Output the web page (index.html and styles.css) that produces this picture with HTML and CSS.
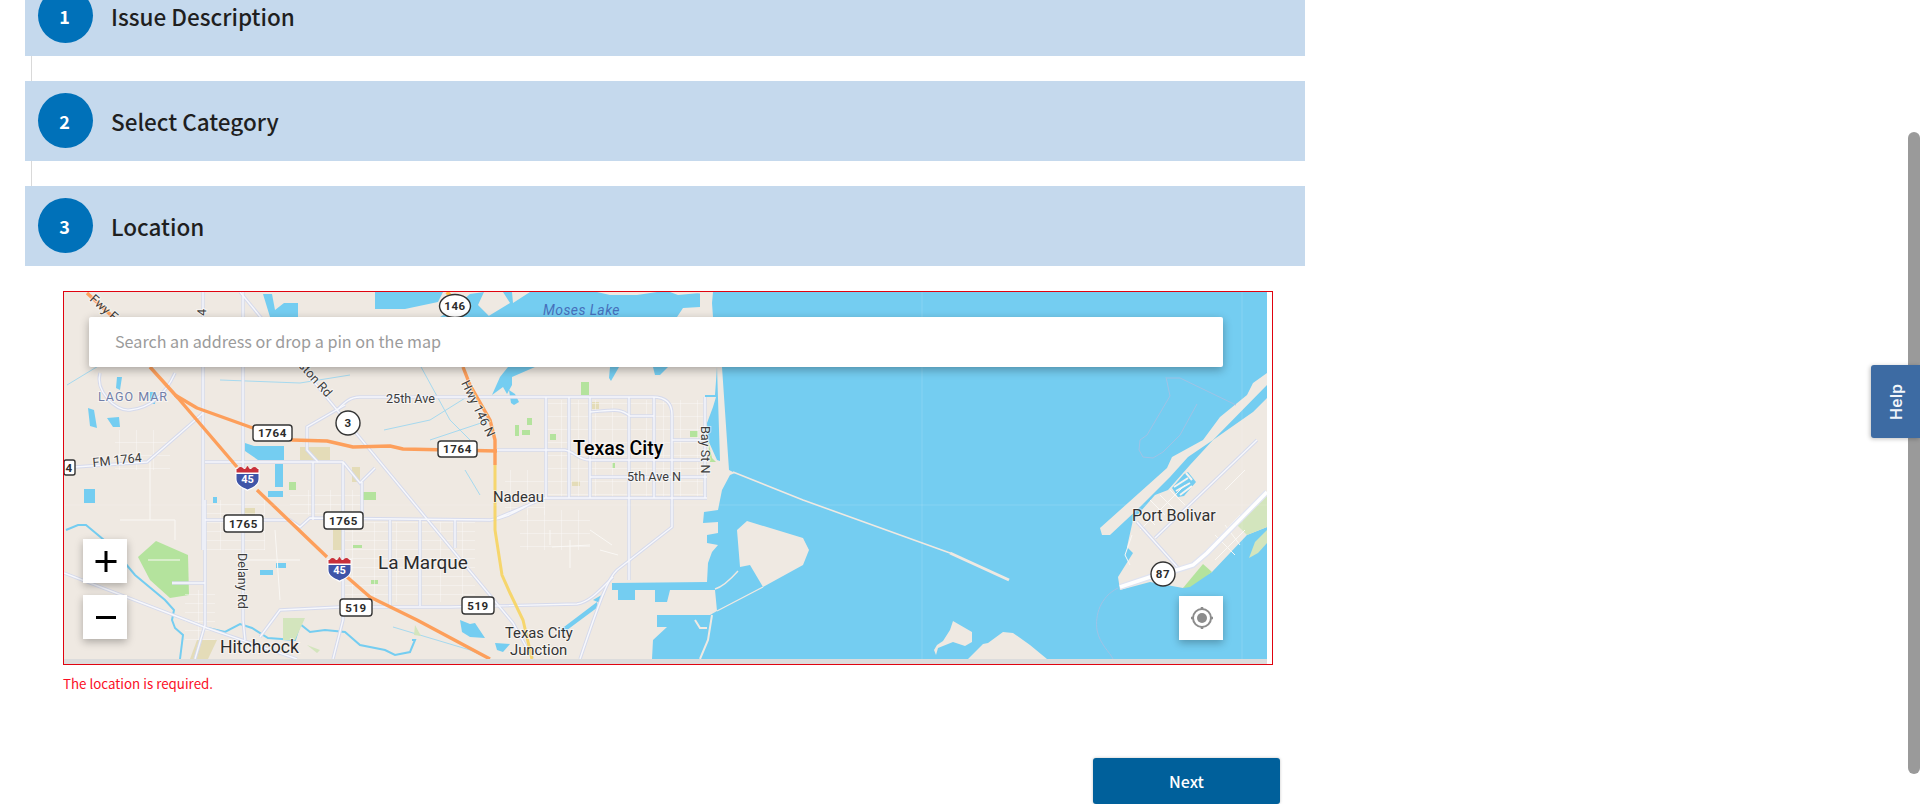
FILE: index.html
```html
<!DOCTYPE html>
<html lang="en">
<head>
<meta charset="utf-8">
<title>Report an issue</title>
<link rel="stylesheet" href="styles.css">
</head>
<body>
<div class="page">
  <div class="steps">
    <div class="step-header"><span class="step-num">1</span><h2 class="step-title">Issue Description</h2></div>
    <div class="connector"></div>
    <div class="step-header"><span class="step-num">2</span><h2 class="step-title">Select Category</h2></div>
    <div class="connector"></div>
    <div class="step-header"><span class="step-num">3</span><h2 class="step-title">Location</h2></div>
    <div class="step-body">
      <div class="map">
        <div class="map-view">
          <svg class="map-svg" viewBox="64 292 1203 367" width="1203" height="367" xmlns="http://www.w3.org/2000/svg">
            <defs>
              <pattern id="blocks" width="17" height="13" patternUnits="userSpaceOnUse">
                <path class="grid" d="M0 0H17M0 0V13"/>
              </pattern>
              <pattern id="blocks2" width="22" height="9" patternUnits="userSpaceOnUse">
                <path class="grid" d="M0 0H22M0 0V9"/>
              </pattern>
              <g id="i45">
                <path class="sh-white" d="M-12 -9 H12 V2 C12 9 5 11 0 14 C-5 11 -12 9 -12 2Z"/>
                <path class="sh-blue" d="M-11 -3 H11 V2 C11 8 5 10 0 12.5 C-5 10 -11 8 -11 2Z"/>
                <path class="sh-red" d="M-11 -8 C-9 -8 -9 -10 -7 -10 C-5 -10 -4 -8 -3 -8 C-1 -8 -1 -11 0 -11 C1 -11 1 -8 3 -8 C4 -8 5 -10 7 -10 C9 -10 9 -8 11 -8 V-4.5 H-11Z"/>
              </g>
              <g id="roads">
                <path d="M240 292 L337 410 L450 547 L513 623 L533 659"/>
                <path d="M337 410 C345 402 350 397 360 397 H653 C668 397 672 405 672 415 V527 L617 570 C608 578 600 600 580 659"/>
                <path d="M203 292 V550 M205 500 V625 L195 659"/>
                <path d="M243 292 V620 M243 620 L245 640"/>
                <path d="M75 467 L147 462 L193 422 L203 413"/>
                <path d="M100 373 C95 390 115 412 130 410 C150 408 165 395 175 373"/>
                <path d="M345 405 L307 427 V450 L318 462"/>
                <path d="M205 462 H343 M313 462 V520 M343 462 V520 M362 482 V520 M343 462 L360 483 L375 468"/>
                <path d="M205 520 H290 L300 527 L310 518 L490 520 C510 518 525 505 543 498 H707 M497 518 L545 498"/>
                <path d="M497 450 H565 C575 452 578 460 590 460 H707 M590 477 H707 M672 440 H705 M705 397 V498 M590 412 C615 410 620 408 630 416 H654"/>
                <path d="M546 397 V498 M569 397 V498 M590 397 V498 M629 397 V580 M654 397 V498"/>
                <path d="M390 520 V606 M420 520 V606 M455 520 V548"/>
                <path d="M260 637 L280 610 L340 607 M372 607 H450 L577 604 C590 602 600 590 613 577"/>
                <path d="M343 520 V620 L333 659"/>
                <path d="M172 583 H205"/>
                <path d="M1257 440 L1155 538 M1137 522 L1180 570 M64 573 L207 628 L297 659"/>
              </g>
            </defs>

            <!-- land base -->
            <rect class="land" x="64" y="292" width="1203" height="367"/>

            <!-- bay -->
            <path class="water" d="M487 317 L510 303 L503 292 H1267 V659 H652 L653 640 L667 627 H657 V615 H710 L717 611 L715 590 H670 L667 602 H655 V590 H635 V600 H618 V590 H612 V583 L707 582 L708 563 L712 552 L718 545 L707 543 V535 L718 533 V522 L703 523 L704 512 L718 510 L722 490 L730 475 L735 473 L729 470 L722 367 H487Z"/>
            <!-- shore pieces around Moses Lake -->
            <path class="land" d="M512 292 H530 L513 303Z M597 292 L610 295 H637 L657 292Z M670 292 L678 295 L700 293 V292Z M677 317 L683 308 L700 307 V292 H713 L712 303 L713 317Z"/>
            <path class="water" d="M717 367 L715 395 H705 V397 H716 L713 407 L707 423 L708 440 L717 460 L720 461Z"/>
            <path class="water" d="M535 367 L512 377 V385 L507 394 L503 387 L492 395 L500 377 L508 367Z"/>
            <path class="water" d="M610 367 H619 L611 381 L609 378Z"/>
            <path class="water" d="M653 367 H668 L660 375 L655 375Z"/>
            <path class="water" d="M375 292 H443 L438 302 L405 309 H375Z"/>
            <path class="water" d="M263 294 L272 294 L275 310 L284 303 H298 V317 H270Z"/>
            <path class="water" d="M440 317 L452 310 L470 294 L484 292 L478 305 L490 317Z"/>
            <!-- breakwater -->
            <path class="dike" d="M733 472 L803 500 L950 553"/>
            <path class="dike-end" d="M950 553 L1009 580"/>
            <!-- land in the bay -->
            <path class="land" d="M737 530 L747 521 L803 538 L809 550 L803 565 L763 587 L750 565 L740 567Z"/>
            <path class="land-line" d="M763 587 L717 611 M738 571 C730 580 722 587 715 589"/>
            <path class="land-sliver" d="M712 615 L708 640 L700 659 M695 620 L700 628 L707 628"/>
            <path class="land" d="M953 621 L972 632 V642 L965 646 L953 642 L938 648 L936 655 L934 650 L937 645 L943 641 L950 630Z"/>
            <path class="land" d="M968 659 L983 644 L988 643 L1003 632 L1013 633 L1030 645 L1047 659Z"/>
            <!-- Bolivar strip and peninsula -->
            <path class="land" d="M1267 373 L1253 383 L1247 395 L1220 417 L1203 440 L1172 457 L1167 468 L1100 528 L1102 535 L1110 535 L1140 507 L1170 477 L1188 457 L1213 440 L1267 385Z"/>
            <path class="land" d="M1267 398 L1253 412 L1213 440 L1190 465 L1168 490 L1155 495 L1133 520 L1127 547 L1133 553 L1118 577 L1120 590 L1150 582 L1183 588 L1212 572 L1247 535 L1267 527Z"/>
            <path class="pale-green" d="M1237 525 L1267 492 V527 L1247 535Z"/>
            <path class="pale-green" d="M1249 558 L1255 542 L1267 530 V543 L1258 553Z"/>
            <path class="green" d="M1183 588 L1203 564 L1212 572 L1190 587Z"/>
            <path class="water" d="M1172 488 L1184 474 L1188 472 L1196 482 L1184 496 L1178 497Z"/>
            <path class="finger" d="M1174 487 L1188 478 M1176 491 L1190 483 M1180 495 L1192 486 M1186 473 L1192 480"/>
            <path class="marine" d="M1166 377 L1170 396 L1147 435 L1140 440 L1139 450 L1143 457 L1153 458 M1167 378 H1180 L1236 405 M1197 404 L1180 435 L1163 452 L1153 458"/>
            <path class="marine" d="M1118 588 C1100 597 1095 615 1097 630 C1100 645 1110 652 1113 659"/>

            <!-- inland water -->
            <path class="water" d="M245 443 L254 446 L284 446 V460 L258 460 L245 451Z"/>
            <path class="water" d="M275 464 H283 V487 H275Z M268 491 H283 V497 H268Z M84 489 H95 V503 H84Z M213 497 H217 V503 H213Z M88 408 L94 410 L97 428 L90 426Z M107 418 L119 417 L120 427 L113 427Z M276 563 H286 V568 H276Z M260 570 H273 V575 H260Z"/>
            <path class="water" d="M150 392 L156 392 L155 404 L150 404Z M117 377 H122 L120 390 L116 388Z"/>
            <path class="water" d="M509 390 L515 394 L519 402 L514 405 L511 403Z"/>
            <path class="water" d="M460 620 L470 624 L475 623 L485 638 L470 637 L462 632Z M495 643 L510 644 L503 652 L497 650Z"/>
            <path class="water" d="M560 630 L597 602 L598 607 L563 633Z M593 600 L605 593 L600 603Z"/>
            <path class="stream" d="M66 530 L78 525 L86 525 L110 545 L135 575 L165 600 L174 610 L172 620 L175 628 L183 635 L180 659"/>
            <path class="stream" d="M208 628 L225 632 L240 624 L252 628 L268 638 L295 640 L300 624 L310 632 L325 630 L345 632 L360 645 L385 650 L395 655 L410 652 L415 640 L412 640"/>
            <path class="thin-stream" d="M67 385 L100 365 M220 380 L300 383 L350 375 M384 430 L430 420 L470 395 M420 365 L450 420 L470 440 M465 470 L480 495 M430 440 L490 420"/>
            <path class="thin-stream" d="M393 627 L470 650 L490 659"/>

            <!-- parks -->
            <path class="green" d="M138 557 L156 541 L188 555 L189 595 L170 598 L150 580Z"/>
            <path class="sand" d="M197 640 H217 L208 659 H190Z"/>
            <path class="sand" d="M300 447 H330 V460 H300Z M352 467 H360 V482 H352Z M243 508 H255 V516 H243Z M333 527 H342 V550 H333Z M592 402 H599 V409 H592Z M572 481 H580 V486 H572Z"/>
            <path class="green" d="M363 492 H376 V500 H363Z M581 382 H589 V395 H581Z M550 434 H556 V440 H550Z M515 425 H519 V436 H515Z M527 418 H532 V425 H527Z M522 430 H530 V435 H522Z M289 482 H296 V490 H289Z M353 545 H362 V548 H353Z M371 580 H378 V584 H371Z M612 463 H615 V468 H612Z"/>
            <path class="green" d="M690 431 H698 V437 H690Z M708 440 L712 458 L716 462 L710 462Z"/>
            <path class="pale-green" d="M415 625 L421 636 L414 635Z M283 618 H305 L295 640 H283Z M307 645 L320 650 L317 653Z"/>

            <!-- street grids -->
            <rect fill="url(#blocks)" x="545" y="400" width="160" height="97"/>
            <rect fill="url(#blocks)" x="505" y="470" width="40" height="45"/>
            <rect fill="url(#blocks2)" x="345" y="522" width="130" height="80"/>
            <rect fill="url(#blocks2)" x="205" y="500" width="60" height="50"/>
            <rect fill="url(#blocks)" x="115" y="430" width="55" height="40"/>
            <rect fill="url(#blocks2)" x="185" y="590" width="30" height="50"/>
            <rect fill="url(#blocks)" x="520" y="510" width="70" height="40"/>
            <rect fill="url(#blocks2)" x="290" y="490" width="70" height="25"/>
            <path class="minor" d="M552 547 L590 545 M600 550 L618 555 M570 540 V568 M590 530 L612 545 M550 530 V545 M120 520 H175 M175 520 V540 M150 460 V520 M148 560 H180 M237 560 H300 M275 530 L280 600 M1150 500 L1165 515 M1160 495 L1175 510 M1170 490 L1185 505 M1140 510 L1155 525 M1140 530 L1180 490 M1150 520 L1185 485 M1132 535 L1125 555 L1130 565 M1205 552 L1240 515 M1215 560 L1245 530 M1215 535 L1235 555 M1225 525 L1240 545 M1245 470 L1225 490"/>

            <!-- roads -->
            <use class="road-edge" href="#roads"/>
            <use class="road-core" href="#roads"/>
            <path class="main-edge" d="M1267 492 L1207 553 L1193 565 L1180 569 L1150 577 L1120 587"/>
            <path class="main-core" d="M1267 492 L1207 553 L1193 565 L1180 569 L1150 577 L1120 587"/>

            <!-- highways -->
            <path class="hwy" d="M87 293 L113 317 M150 367 L178 398 L237 467 M257 490 L327 557 M339 570 L370 597 L417 620 L490 659"/>
            <path class="hwy" d="M175 395 L197 408 L250 427 L292 440 L327 441 L353 447 L390 446 L403 449 L497 451"/>
            <path class="hwy" d="M463 367 L470 385 L490 420 L495 440 V465"/>
            <path class="hwy-thin" d="M447 292 L452 298"/>
            <path class="yellow" d="M495 465 V530 L502 575 L510 593 L523 620 L532 659"/>

            <!-- labels -->
            <text class="lbl water-lbl" x="543" y="315">Moses Lake</text>
            <text class="lbl lago" x="98" y="401">LAGO MAR</text>
            <text class="lbl small" x="386" y="403">25th Ave</text>
            <text class="lbl small" transform="translate(93 467) rotate(-6)">FM 1764</text>
            <text class="lbl small" transform="translate(461 383) rotate(64)">Hwy 146 N</text>
            <text class="lbl small" transform="translate(298 366) rotate(48)">ston Rd</text>
            <text class="lbl small" transform="translate(89 300) rotate(42)">Fwy Fr</text>
            <text class="lbl small" transform="translate(206 316) rotate(-88)">4</text>
            <text class="lbl city" x="573" y="455">Texas City</text>
            <text class="lbl small" x="627" y="481">5th Ave N</text>
            <text class="lbl small" transform="translate(701 426) rotate(90)">Bay St N</text>
            <text class="lbl town-sm" x="493" y="502">Nadeau</text>
            <text class="lbl small" transform="translate(238 553) rotate(90)">Delany Rd</text>
            <text class="lbl town" x="378" y="569">La Marque</text>
            <text class="lbl town hitch" x="220" y="653">Hitchcock</text>
            <text class="lbl town-sm" x="505" y="638">Texas City</text>
            <text class="lbl town-sm" x="510" y="655">Junction</text>
            <text class="lbl port" x="1132" y="521">Port Bolivar</text>

            <!-- route shields -->
            <g class="shield">
              <rect x="64" y="460" width="11" height="15" rx="2"/>
              <text x="69" y="472">4</text>
              <rect x="253" y="425" width="39" height="16" rx="3"/>
              <text x="272.5" y="437">1764</text>
              <rect x="438" y="441" width="39" height="16" rx="3"/>
              <text x="457.5" y="453">1764</text>
              <rect x="224" y="515" width="39" height="17" rx="3"/>
              <text x="243.5" y="527.5">1765</text>
              <rect x="324" y="512" width="39" height="17" rx="3"/>
              <text x="343.5" y="524.5">1765</text>
              <rect x="340" y="599" width="32" height="17" rx="3"/>
              <text x="356" y="611.5">519</text>
              <rect x="462" y="597" width="32" height="17" rx="3"/>
              <text x="478" y="609.5">519</text>
              <ellipse cx="455" cy="306" rx="15.5" ry="11.5"/>
              <text x="455" y="310">146</text>
              <circle cx="348" cy="423" r="12"/>
              <text x="348" y="427">3</text>
              <circle cx="1163" cy="574" r="12"/>
              <text x="1163" y="578">87</text>
            </g>
            <use href="#i45" x="247.5" y="477"/>
            <use href="#i45" x="339.5" y="568"/>
            <text class="i45-num" x="247.5" y="483">45</text>
            <text class="i45-num" x="339.5" y="574">45</text>

            <!-- tile seams -->
            <path class="seam" d="M922 292 V659 M1242 292 V659 M64 505 H1267"/>
          </svg>

          <div class="map-search">
            <input class="map-search-input" type="text" placeholder="Search an address or drop a pin on the map">
          </div>

          <div class="zoom-ctrl">
            <button class="map-btn" type="button" aria-label="Zoom in">
              <svg viewBox="0 0 44 44" width="44" height="44"><path class="ctrl-icon" d="M23 12V33M12.5 22.5H33.5"/></svg>
            </button>
            <button class="map-btn" type="button" aria-label="Zoom out">
              <svg viewBox="0 0 44 44" width="44" height="44"><path class="ctrl-icon" d="M13 22.5H33"/></svg>
            </button>
          </div>

          <button class="map-btn locate-btn" type="button" aria-label="Use my location">
            <svg viewBox="0 0 44 44" width="44" height="44">
              <circle class="loc-ring" cx="23" cy="22" r="9"/>
              <circle class="loc-dot" cx="23" cy="22" r="5"/>
              <path class="loc-ticks" d="M23 11V14M23 30V33M12 22H15M31 22H34"/>
            </svg>
          </button>
        </div>
        <div class="scroll-bottom"><span class="scroll-h"></span><span class="scroll-corner"></span></div>
      </div>
      <p class="error">The location is required.</p>
      <div class="actions"><button class="next" type="button">Next</button></div>
    </div>
  </div>
  <div class="page-scroll"></div>
  <button class="help" type="button"><span class="help-label">Help</span></button>
</div>
</body>
</html>
```
FILE: styles.css
```css
* { box-sizing: border-box; }
html, body { margin: 0; padding: 0; background: #fff; }
body { font-family: "Noto Sans CJK JP", "Noto Sans", sans-serif; color: #1f1f1f; overflow: hidden; }
.page { position: relative; width: 1920px; height: 804px; overflow: hidden; }

.steps { width: 1280px; margin: -24px 0 0 25px; }
.step-header { display: flex; align-items: center; gap: 18px; height: 80px; padding: 0 0 1px 13px; background: #c5d9ed; }
.step-num { display: flex; align-items: center; justify-content: center; flex: none; width: 55px; height: 55px; padding-right: 2px; border-radius: 50%; background: #0071b9; color: #fff; font-size: 18px; font-weight: 700; }
.step-title { margin: 0; font-size: 22.5px; font-weight: 500; line-height: 30px; color: #1f1f1f; }
.connector { width: 1px; height: 25px; margin-left: 6px; background: #d9d9d9; }

.step-body { padding: 25px 0 0 38px; }
.map { width: 1210px; height: 374px; border: 1px solid #e0030f; display: flex; flex-direction: column; }
.map-view { position: relative; width: 1203px; height: 367px; overflow: hidden; background: #efe9e2; }
.map-svg { display: block; }
.scroll-bottom { display: flex; height: 5px; }
.scroll-h { width: 1203px; background: #dcdcdc; }
.scroll-corner { flex: 1; background: #fff; }

.map-search { position: absolute; left: 25px; top: 25px; width: 1134px; height: 50px; background: #fff; border-radius: 2px; box-shadow: 0 3px 10px rgba(0,0,0,.3); }
.map-search-input { display: block; width: 100%; height: 100%; padding: 0 26px 2px; border: 0; outline: 0; background: transparent; font-family: inherit; font-size: 16.15px; color: #333; }
.map-search-input::placeholder { color: #9b9b9b; opacity: 1; }

.map-btn { display: block; width: 44px; height: 44px; padding: 0; border: 0; background: #fff; box-shadow: 0 3px 8px rgba(0,0,0,.28); }
.map-btn svg { display: block; }
.zoom-ctrl { position: absolute; left: 19px; top: 247px; display: flex; flex-direction: column; gap: 12px; }
.locate-btn { position: absolute; left: 1115px; top: 304px; }
.ctrl-icon { fill: none; stroke: #000; stroke-width: 3; }
.loc-ring { fill: none; stroke: #8c8c8c; stroke-width: 2; }
.loc-dot { fill: #8c8c8c; }
.loc-ticks { stroke: #8c8c8c; stroke-width: 2.5; fill: none; }

/* map drawing */
.land { fill: #efe9e2; }
.water { fill: #74cdf1; }
.dike { fill: none; stroke: #efe9e2; stroke-width: 1.6; }
.dike-end { fill: none; stroke: #efe9e2; stroke-width: 3; }
.land-line { fill: none; stroke: #efe9e2; stroke-width: 1.4; }
.land-sliver { fill: none; stroke: #efe9e2; stroke-width: 2; }
.finger { fill: none; stroke: #f6f3ef; stroke-width: 2; }
.green { fill: #b4e39d; }
.pale-green { fill: #d3e5bd; }
.sand { fill: #e4dcb8; }
.marine { fill: none; stroke: #9fc3e6; stroke-width: 1; }
.stream { fill: none; stroke: #74cdf1; stroke-width: 2; }
.thin-stream { fill: none; stroke: #a6d9ef; stroke-width: 1; }
.grid { fill: none; stroke: #faf8f5; stroke-width: 1; }
.minor { fill: none; stroke: #faf8f5; stroke-width: 1; }
.road-edge { fill: none; stroke: #d6daec; stroke-width: 3.4; }
.road-core { fill: none; stroke: #f7f8fc; stroke-width: 1.4; }
.main-edge { fill: none; stroke: #dfe3f1; stroke-width: 6; }
.main-core { fill: none; stroke: #fff; stroke-width: 3.5; }
.hwy { fill: none; stroke: #fd9f5b; stroke-width: 3.4; stroke-linejoin: round; }
.hwy-thin { fill: none; stroke: #fbbf4e; stroke-width: 4; }
.yellow { fill: none; stroke: #f6d66d; stroke-width: 3; }
.seam { fill: none; stroke: #fff; stroke-opacity: .14; stroke-width: 1; }

.lbl { font-family: Roboto, "Liberation Sans", sans-serif; paint-order: stroke; stroke: rgba(255,255,255,.55); stroke-width: 2px; fill: #333; }
.small { font-size: 12.6px; fill: #3c3c3c; }
.city { font-size: 19.5px; font-weight: 500; fill: #000; }
.town { font-size: 19px; fill: #2b2b2b; }
.hitch { font-size: 17.6px; }
.town-sm { font-size: 14.8px; fill: #333; }
.port { font-size: 16.2px; fill: #333; }
.water-lbl { font-size: 14px; font-style: italic; fill: #4670bb; stroke: none; letter-spacing: .4px; }
.lago { font-size: 12.5px; fill: #727fa9; letter-spacing: 1px; }
.shield rect, .shield circle, .shield ellipse { fill: #fff; stroke: #333; stroke-width: 1.4; }
.shield text { font-family: Roboto, "Liberation Sans", sans-serif; font-size: 11.5px; font-weight: 700; fill: #2b2b2b; text-anchor: middle; letter-spacing: .6px; }
.sh-white { fill: #fff; }
.sh-blue { fill: #3f55a8; }
.sh-red { fill: #c8303a; }
.i45-num { font-family: Roboto, "Liberation Sans", sans-serif; font-size: 11px; font-weight: 700; fill: #fff; text-anchor: middle; }

.error { margin: 9px 0 0; font-size: 13.35px; line-height: 20px; color: #fb0f26; }
.actions { display: flex; justify-content: flex-end; margin-top: 64px; margin-right: 25px; }
.next { width: 187px; height: 46px; border: 0; border-radius: 3px; background: #00609b; color: #fff; font-family: inherit; font-size: 16px; font-weight: 500; box-shadow: 0 0 3px rgba(0,0,0,.25); }

.page-scroll { position: absolute; right: 0; top: 132px; width: 12px; height: 642px; border-radius: 6px; background: #9a9a9a; }
.help { position: absolute; right: 0; top: 365px; display: flex; align-items: center; justify-content: center; width: 49px; height: 73px; padding: 0; border: 0; border-radius: 3px 0 0 3px; background: #3d6ba3; color: #f2f6fa; box-shadow: -1px 1px 4px rgba(0,0,0,.25); }
.help-label { display: block; transform: rotate(-90deg); font-family: Roboto, sans-serif; font-size: 17px; font-weight: 500; letter-spacing: .2px; }
```
